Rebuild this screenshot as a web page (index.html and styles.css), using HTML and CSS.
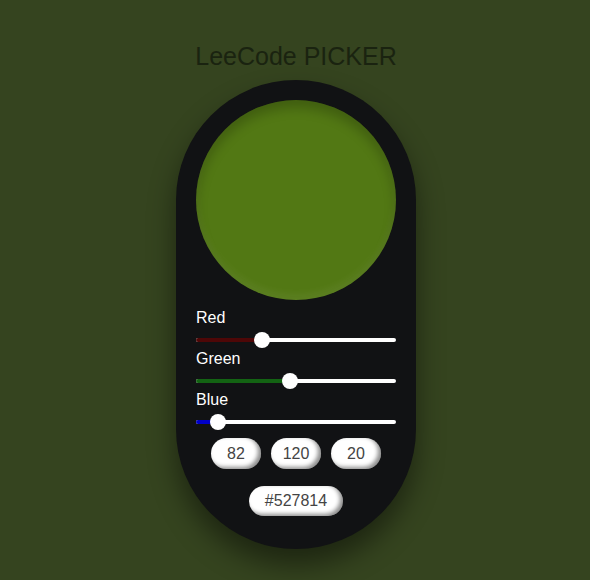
FILE: index.html
```html
<!DOCTYPE html>
<html>
<head>
<meta charset="utf-8">
<link rel="stylesheet" href="styles.css">
</head>
<body>
<h1 class="title">LeeCode PICKER</h1>
<div class="card">
  <div class="swatch"></div>
  <div class="controls">
    <label class="lbl">Red</label>
    <div class="slider"><div class="track"><div class="fill fill-red" style="width:33%"></div></div><div class="thumb" style="left:33%"></div></div>
    <label class="lbl">Green</label>
    <div class="slider"><div class="track"><div class="fill fill-green" style="width:47%"></div></div><div class="thumb" style="left:47%"></div></div>
    <label class="lbl">Blue</label>
    <div class="slider"><div class="track"><div class="fill fill-blue" style="width:11%"></div></div><div class="thumb" style="left:11%"></div></div>
  </div>
  <div class="values">
    <div class="pill">82</div>
    <div class="pill">120</div>
    <div class="pill">20</div>
  </div>
  <div class="pill hex">#527814</div>
</div>
</body>
</html>
```
FILE: styles.css
```css
html, body {
  margin: 0;
  padding: 0;
}
body {
  background: #35441f;
  font-family: "Liberation Sans", Arial, sans-serif;
  display: flex;
  flex-direction: column;
  align-items: center;
  box-sizing: border-box;
  padding-left: 2px;
  width: 590px;
  height: 580px;
  overflow: hidden;
}
.title {
  margin: 41px 0 9px;
  font-size: 25px;
  line-height: 30px;
  font-weight: normal;
  color: #1a2310;
  text-align: center;
}
.card {
  width: 240px;
  height: 469px;
  box-sizing: border-box;
  padding: 20px 20px 0;
  background: #111214;
  border-radius: 120px;
  box-shadow: 0 16px 28px rgba(0, 0, 0, 0.45);
  display: flex;
  flex-direction: column;
  align-items: center;
}
.swatch {
  width: 200px;
  height: 200px;
  border-radius: 50%;
  background: #527814;
  box-shadow: inset 0 8px 12px rgba(0, 0, 0, 0.22), inset 0 -5px 8px rgba(255, 255, 255, 0.07);
  flex: none;
}
.controls {
  width: 200px;
  margin-top: 9px;
  display: flex;
  flex-direction: column;
}
.lbl {
  display: block;
  color: #ffffff;
  font-size: 16px;
  line-height: 18px;
  height: 18px;
  margin-bottom: 5px;
}
.slider {
  position: relative;
  height: 16px;
  display: flex;
  align-items: center;
  margin-bottom: 2px;
}
.track {
  width: 100%;
  height: 4px;
  border-radius: 2px;
  background: #ffffff;
  overflow: hidden;
}
.fill {
  height: 100%;
}
.fill-red { background: #4e0707; }
.fill-green { background: #136313; }
.fill-blue { background: #0000c8; }
.thumb {
  position: absolute;
  top: 0;
  width: 16px;
  height: 16px;
  margin-left: -8px;
  border-radius: 50%;
  background: #ffffff;
}
.values {
  display: flex;
  gap: 10px;
  margin-top: 6px;
}
.pill {
  width: 50px;
  height: 31px;
  border-radius: 16px;
  background: #ffffff;
  color: #444;
  font-size: 16px;
  line-height: 31px;
  text-align: center;
  box-shadow: inset -3px -2px 4px rgba(0, 0, 0, 0.45);
}
.hex {
  width: 94px;
  height: 30px;
  line-height: 30px;
  margin-top: 17px;
}
```
